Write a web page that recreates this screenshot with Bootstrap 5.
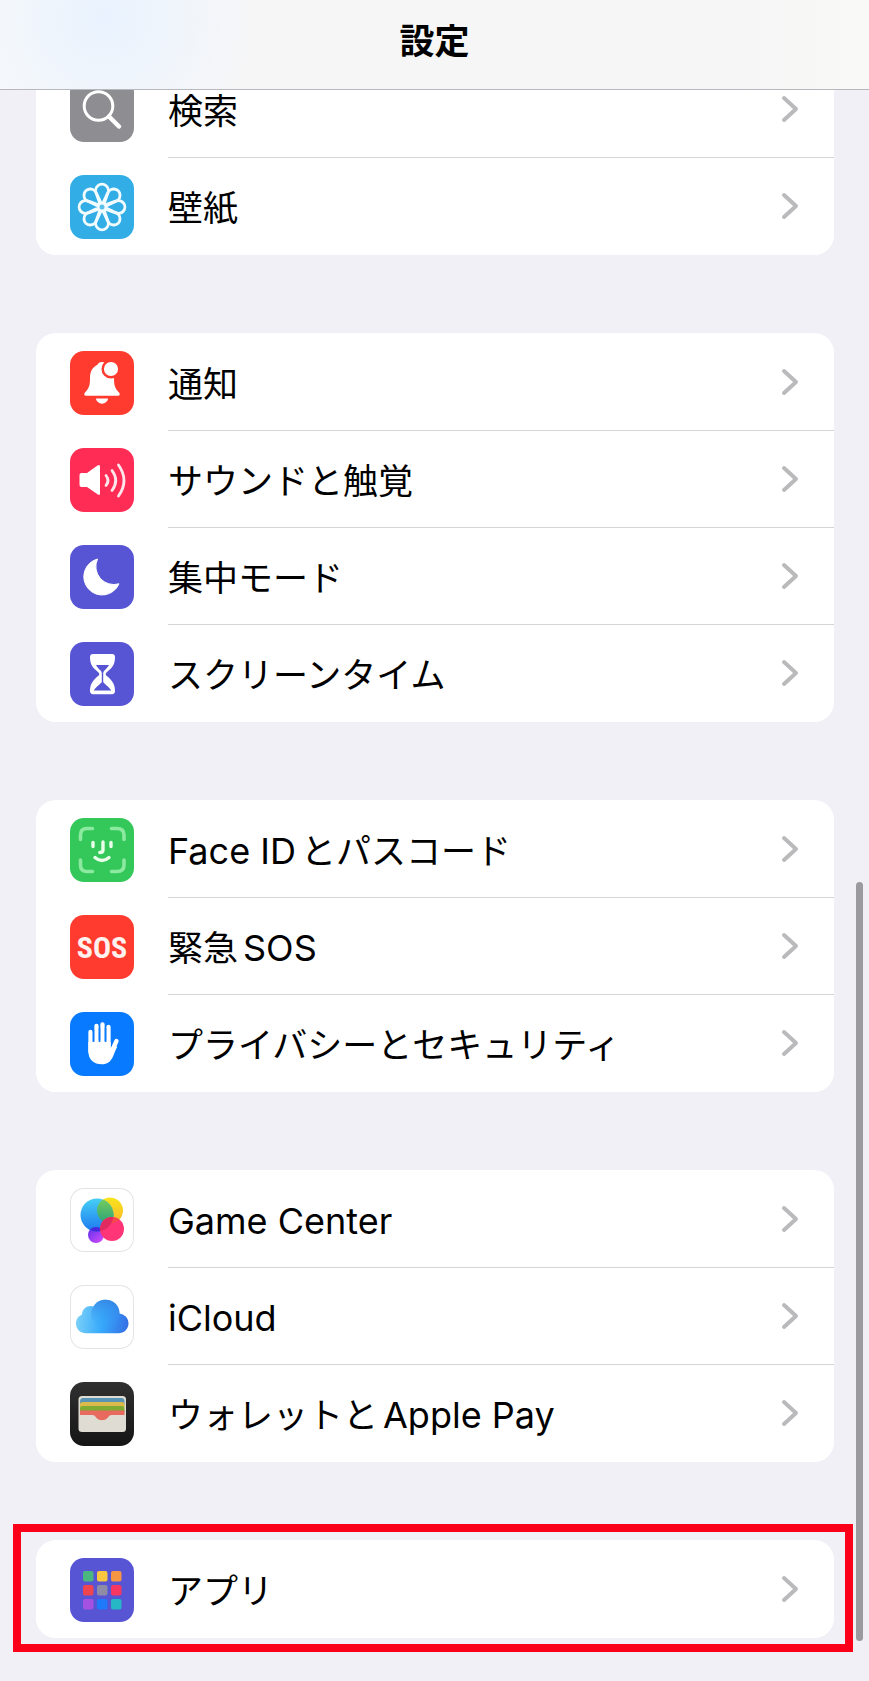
<!DOCTYPE html>
<html lang="ja">
<head>
<meta charset="utf-8">
<meta name="viewport" content="width=device-width, initial-scale=1">
<title>設定</title>
<link href="https://cdn.jsdelivr.net/npm/bootstrap@5.3.0/dist/css/bootstrap.min.css" rel="stylesheet">
<style>
  body {
    background: #f2f0f7;
    color: #000;
    font-family: Inter, "Noto Sans CJK JP", sans-serif;
    font-size: 35px;
    line-height: 48px;
  }
  .title-bar {
    height: 90px;
    border-bottom: 1px solid #b9b7be;
    background:
      radial-gradient(circle at 12% 20%, #e9f2fe 0, #eff5fc 60px, #f6f6f600 150px),
      linear-gradient(90deg, #f8fafc 0, #f6f6f7 25%, #f6f6f6 85%, #f9f9f8 100%);
  }
  .title-bar h1 { font-size: 35px; line-height: 48px; padding-bottom: 8px; }
  .settings { padding: 60px 35px 43px 36px; gap: 78px; }
  .group.list-group {
    background: #fff;
    border-radius: 20px;
    overflow: hidden;
    padding-top: 1px;
  }
  .setting { --bs-list-group-color: #000; padding-left: 34px; gap: 34px; }
  .tile { width: 64px; height: 64px; border-radius: 14px; flex: none; }
  .tile-light { box-shadow: inset 0 0 0 1px #e4e4e6; }
  .label-cell { height: 97px; padding-right: 35px; border-bottom: 1px solid #d5d5d8; }
  .label-text { padding-top: 3px; }
  .setting:last-child .label-cell { border-bottom-color: transparent; }
  .latin { font-size: 36px; }
  .latin-before { margin-right: 5px; }
  .latin-after { margin-left: 5px; }
  .chevron { width: 18px; height: 28px; flex: none; fill: none; stroke: #bababc; stroke-width: 4; stroke-linecap: round; stroke-linejoin: round; }
  .highlight::after {
    content: "";
    position: absolute;
    inset: -16px -19px -14px -23px;
    border: 8px solid #fb0019;
    pointer-events: none;
  }
  .scroll-thumb { top: 882px; right: 6px; width: 7px; bottom: 40px; background: #9b9a9f; z-index: 5; }
</style>
</head>
<body>
<svg class="d-none" aria-hidden="true">
  <symbol id="chevron" viewBox="0 0 18 28"><path d="M3 3l12 11L3 25"/></symbol>
</svg>

<header class="title-bar fixed-top d-flex align-items-center justify-content-center">
  <h1 class="fw-bold m-0">設定</h1>
</header>

<main class="settings position-relative d-flex flex-column">
  <nav class="group list-group list-group-flush" aria-label="検索と壁紙">
    <a href="#" class="setting list-group-item list-group-item-action border-0 py-0 pe-0 d-flex align-items-center">
      <svg class="tile" viewBox="0 0 64 64" style="background:#8e8d92" aria-hidden="true"><g fill="none" stroke="#fff" stroke-linecap="round"><circle cx="28.500" cy="28" r="14.300" stroke-width="3"/><path d="M39 38.500l10 10" stroke-width="4.500"/></g></svg>
      <span class="label-cell flex-grow-1 d-flex align-items-center justify-content-between"><span class="label-text">検索</span><svg class="chevron"><use href="#chevron"/></svg></span>
    </a>
    <a href="#" class="setting list-group-item list-group-item-action border-0 py-0 pe-0 d-flex align-items-center">
      <svg class="tile" viewBox="0 0 64 64" style="background:#32ade6" aria-hidden="true">
        <defs><path id="petal" d="M32 30L26.800 19A6.300 6.300 0 1 1 37.200 19Z"/></defs>
        <g fill="none" stroke="#f2fcff" stroke-width="2.900" stroke-linejoin="round"><use href="#petal"/><use href="#petal" transform="rotate(45 32 32)"/><use href="#petal" transform="rotate(90 32 32)"/><use href="#petal" transform="rotate(135 32 32)"/><use href="#petal" transform="rotate(180 32 32)"/><use href="#petal" transform="rotate(225 32 32)"/><use href="#petal" transform="rotate(270 32 32)"/><use href="#petal" transform="rotate(315 32 32)"/></g>
        <circle cx="32" cy="32" r="2.500" fill="#5bbfe9"/>
      </svg>
      <span class="label-cell flex-grow-1 d-flex align-items-center justify-content-between"><span class="label-text">壁紙</span><svg class="chevron"><use href="#chevron"/></svg></span>
    </a>
  </nav>

  <nav class="group list-group list-group-flush" aria-label="通知と集中">
    <a href="#" class="setting list-group-item list-group-item-action border-0 py-0 pe-0 d-flex align-items-center">
      <svg class="tile" viewBox="0 0 64 64" style="background:#ff3b2f" aria-hidden="true"><path fill="#fff" d="M32 11c-2.500 0-4 1.200-4.500 2.700C22.500 16 20 20.500 20 27c0 8-1 10-5 14.500-1.500 2-.7 3.300 1.200 3.300h31.600c1.900 0 2.700-1.300 1.200-3.300C45 37 44 35 44 27c0-7-3-11-7.500-13.300C36 12.200 34.500 11 32 11ZM25.800 47.500h12.400c-.8 3.300-3.200 5.200-6.200 5.200s-5.400-1.900-6.200-5.200Z"/><circle cx="41" cy="18" r="8.300" fill="#fff" stroke="#ff3b2f" stroke-width="2.500"/></svg>
      <span class="label-cell flex-grow-1 d-flex align-items-center justify-content-between"><span class="label-text">通知</span><svg class="chevron"><use href="#chevron"/></svg></span>
    </a>
    <a href="#" class="setting list-group-item list-group-item-action border-0 py-0 pe-0 d-flex align-items-center">
      <svg class="tile" viewBox="0 0 64 64" style="background:#ff2d55" aria-hidden="true"><path fill="#fff" d="M11.500 25H17L27.500 17.400Q30 16 30 18.500v27Q30 48 27.500 46.300L17 39h-5.500Q9.500 39 9.500 37V27Q9.500 25 11.500 25Z"/><g fill="none" stroke="#ffe6ec" stroke-width="2.800" stroke-linecap="round"><path d="M36 27.500q4 5 0 10M42 22.500q7.500 10 0 20M48.500 17q11 15.500 0 31"/></g></svg>
      <span class="label-cell flex-grow-1 d-flex align-items-center justify-content-between"><span class="label-text">サウンドと触覚</span><svg class="chevron"><use href="#chevron"/></svg></span>
    </a>
    <a href="#" class="setting list-group-item list-group-item-action border-0 py-0 pe-0 d-flex align-items-center">
      <svg class="tile" viewBox="0 0 64 64" style="background:#5755d3" aria-hidden="true"><path fill="#fff" stroke="#fff" stroke-linejoin="round" d="M27.500 14A18.300 18.300 0 1 0 49 38.800A18 18 0 0 1 27.500 14Z"/></svg>
      <span class="label-cell flex-grow-1 d-flex align-items-center justify-content-between"><span class="label-text">集中モード</span><svg class="chevron"><use href="#chevron"/></svg></span>
    </a>
    <a href="#" class="setting list-group-item list-group-item-action border-0 py-0 pe-0 d-flex align-items-center">
      <svg class="tile" viewBox="0 0 64 64" style="background:#5755d3" aria-hidden="true"><path fill="#fff" d="M23 12h19c2 0 3 1.300 3 3 0 8-3 11-8.500 15.500-1 1-1 2.300 0 3.200C42 38 45 42 45 49c0 2-1 3.200-3 3.200H23c-2 0-3-1.200-3-3.200 0-7 3-11 8.500-15.300 1-.9 1-2.200 0-3.200C23 26 20 23 20 15c0-1.700 1-3 3-3Z"/><path fill="#5755d3" d="M26 23h13c-1 2-3 4-4.800 5.800-.8.900-1 1.700-1 3.200v8c1 1.800 5.600 4.400 8 8.600H23.800c2.400-4.200 7-6.800 8-8.600v-8c0-1.500-.2-2.300-1-3.200C29 27 27 25 26 23Z"/></svg>
      <span class="label-cell flex-grow-1 d-flex align-items-center justify-content-between"><span class="label-text">スクリーンタイム</span><svg class="chevron"><use href="#chevron"/></svg></span>
    </a>
  </nav>

  <nav class="group list-group list-group-flush" aria-label="セキュリティ">
    <a href="#" class="setting list-group-item list-group-item-action border-0 py-0 pe-0 d-flex align-items-center">
      <svg class="tile" viewBox="0 0 64 64" style="background:#34c759" aria-hidden="true"><g fill="none" stroke-linecap="round"><path stroke="#8ce9a0" stroke-width="3.600" d="M10.500 21.500V17q0-6.500 6.500-6.500h5.500M41.500 10.500H47q7 0 7 6.500v4.500M10.500 42v5q0 6.500 6.500 6.500h5.500M41.500 53.500H47q7 0 7-6.500v-5"/><path stroke="#e9ffea" stroke-width="3.400" d="M23 24.500v4M41 24.500v4M33 24v8q0 2.500-3.200 2.500M25 39.500q7 6 14 0"/></g></svg>
      <span class="label-cell flex-grow-1 d-flex align-items-center justify-content-between"><span class="label-text"><span class="latin latin-before">Face ID</span>とパスコード</span><svg class="chevron"><use href="#chevron"/></svg></span>
    </a>
    <a href="#" class="setting list-group-item list-group-item-action border-0 py-0 pe-0 d-flex align-items-center">
      <svg class="tile" viewBox="0 0 64 64" style="background:#ff3b2f" aria-hidden="true"><text x="32" y="43" text-anchor="middle" fill="#fff1ee" font-family="'Roboto Condensed','Liberation Sans Narrow',sans-serif" font-weight="700" font-size="30">SOS</text></svg>
      <span class="label-cell flex-grow-1 d-flex align-items-center justify-content-between"><span class="label-text">緊急<span class="latin latin-after">SOS</span></span><svg class="chevron"><use href="#chevron"/></svg></span>
    </a>
    <a href="#" class="setting list-group-item list-group-item-action border-0 py-0 pe-0 d-flex align-items-center">
      <svg class="tile" viewBox="0 0 64 64" style="background:#087aff" aria-hidden="true"><g fill="none" stroke="#fff" stroke-width="4.300" stroke-linecap="round"><path d="M20.500 20v20M26.500 14v22M32.500 12.300V36M38.500 15v21M46.500 29L41 41"/></g><path fill="#fff" d="M18.350 30h22.300v7l3.500-5 3 3C45.500 38 44.500 41 43 44.500 40.500 50 37 52.300 32 52.300c-8.500 0-13.650-4.800-13.650-13.300Z"/><path stroke="#087aff" stroke-width="1.500" d="M23.500 18v11M29.500 16v12M35.500 16v13"/></svg>
      <span class="label-cell flex-grow-1 d-flex align-items-center justify-content-between"><span class="label-text">プライバシーとセキュリティ</span><svg class="chevron"><use href="#chevron"/></svg></span>
    </a>
  </nav>

  <nav class="group list-group list-group-flush" aria-label="サービス">
    <a href="#" class="setting list-group-item list-group-item-action border-0 py-0 pe-0 d-flex align-items-center">
      <svg class="tile tile-light" viewBox="0 0 64 64" aria-hidden="true">
        <defs>
          <linearGradient id="gcBlue" x1="0" y1="0" x2="0" y2="1"><stop stop-color="#47cff5"/><stop offset="1" stop-color="#1c79ef"/></linearGradient>
          <linearGradient id="gcYellow" x1="0" y1="0" x2="0" y2="1"><stop stop-color="#f8e51d"/><stop offset="1" stop-color="#fbb52b"/></linearGradient>
          <linearGradient id="gcGreen" x1="0" y1="0" x2="0" y2="1"><stop stop-color="#79cf59"/><stop offset="1" stop-color="#2ba27c"/></linearGradient>
          <linearGradient id="gcPurple" x1="0" y1="0" x2="1" y2="1"><stop stop-color="#5a30e8"/><stop offset="1" stop-color="#d94cff"/></linearGradient>
          <clipPath id="gcClip"><circle cx="27" cy="27" r="16.500"/></clipPath>
          <clipPath id="gcRedClip"><circle cx="42" cy="41" r="12"/></clipPath>
        </defs>
        <circle cx="26" cy="47" r="8" fill="url(#gcPurple)"/><circle cx="40" cy="22.500" r="13" fill="url(#gcYellow)"/><circle cx="27" cy="27" r="16.500" fill="url(#gcBlue)"/><circle cx="40" cy="22.500" r="13" fill="url(#gcGreen)" clip-path="url(#gcClip)"/><circle cx="26" cy="47" r="8" fill="#4827dc" clip-path="url(#gcClip)"/><circle cx="42" cy="41" r="12" fill="#ff3578"/><g clip-path="url(#gcRedClip)"><circle cx="40" cy="22.500" r="13" fill="#f8484e"/><circle cx="27" cy="27" r="16.500" fill="#e02b60"/></g>
      </svg>
      <span class="label-cell flex-grow-1 d-flex align-items-center justify-content-between"><span class="label-text latin">Game Center</span><svg class="chevron"><use href="#chevron"/></svg></span>
    </a>
    <a href="#" class="setting list-group-item list-group-item-action border-0 py-0 pe-0 d-flex align-items-center">
      <svg class="tile tile-light" viewBox="0 0 64 64" aria-hidden="true">
        <defs><linearGradient id="cloudFill" gradientUnits="userSpaceOnUse" x1="6" y1="36" x2="58" y2="42"><stop stop-color="#7ad0f8"/><stop offset=".5" stop-color="#36a9fb"/><stop offset="1" stop-color="#356fe5"/></linearGradient>
        <linearGradient id="cloudTop" x1="0" y1="0" x2="0" y2="1"><stop stop-color="#357fe0" stop-opacity=".75"/><stop offset="1" stop-color="#36a9fb" stop-opacity="0"/></linearGradient></defs>
        <path fill="url(#cloudFill)" d="M16.500 48.300C10 48.300 6 44 6 38.500c0-4.500 2.500-7.500 6-9 .3-5.500 4-8.500 9-8.500 1 0 1.700.2 2.500.5 2-4 6.500-6.700 12-6.700 8 0 14 5.500 14 13.700 5.500.8 9 4.800 9 9.800 0 6-4.500 10-10 10Z"/><circle cx="35.500" cy="29" r="14.200" fill="url(#cloudTop)"/>
      </svg>
      <span class="label-cell flex-grow-1 d-flex align-items-center justify-content-between"><span class="label-text latin">iCloud</span><svg class="chevron"><use href="#chevron"/></svg></span>
    </a>
    <a href="#" class="setting list-group-item list-group-item-action border-0 py-0 pe-0 d-flex align-items-center">
      <svg class="tile" viewBox="0 0 64 64" style="background:linear-gradient(#303030,#151515)" aria-hidden="true"><rect x="8.500" y="14" width="47.500" height="36" rx="3.500" fill="#dfddd3"/><path fill="#5794b5" d="M10 19.500q0-3.500 3-3.500h38.500q3 0 3 3.500v4H10Z"/><path fill="#dbb94a" d="M10 22q0-2 3-2h38.500q3 0 3 2v3H10Z"/><path fill="#80ab32" d="M10 26q0-2 3-2h38.500q3 0 3 2v4H10Z"/><path fill="#e8695d" d="M10 28.500h44.500V33H42c-2.500 0-3 1-4.500 3-3 3-8 3-11 0-1.500-2-2-3-4.500-3H10Z"/></svg>
      <span class="label-cell flex-grow-1 d-flex align-items-center justify-content-between"><span class="label-text">ウォレットと<span class="latin latin-after">Apple Pay</span></span><svg class="chevron"><use href="#chevron"/></svg></span>
    </a>
  </nav>

  <div class="highlight position-relative">
    <nav class="group list-group list-group-flush" aria-label="アプリ">
      <a href="#" class="setting list-group-item list-group-item-action border-0 py-0 pe-0 d-flex align-items-center">
        <svg class="tile" viewBox="0 0 64 64" style="background:#5755d3" aria-hidden="true"><g stroke-width="0"><rect x="13" y="13" width="10.500" height="10.500" rx="2" fill="#4bb780"/><rect x="27" y="13" width="10.500" height="10.500" rx="2" fill="#fac53f"/><rect x="41" y="13" width="10.500" height="10.500" rx="2" fill="#f69645"/><rect x="13" y="27" width="10.500" height="10.500" rx="2" fill="#f0454f"/><rect x="27" y="27" width="10.500" height="10.500" rx="2" fill="#8e8ba6"/><rect x="41" y="27" width="10.500" height="10.500" rx="2" fill="#f73762"/><rect x="13" y="41" width="10.500" height="10.500" rx="2" fill="#a552e3"/><rect x="27" y="41" width="10.500" height="10.500" rx="2" fill="#1f79f8"/><rect x="41" y="41" width="10.500" height="10.500" rx="2" fill="#26b8c4"/></g></svg>
        <span class="label-cell flex-grow-1 d-flex align-items-center justify-content-between"><span class="label-text">アプリ</span><svg class="chevron"><use href="#chevron"/></svg></span>
      </a>
    </nav>
  </div>

  <div class="scroll-thumb position-absolute rounded-pill" aria-hidden="true"></div>
</main>
<script src="https://cdn.jsdelivr.net/npm/bootstrap@5.3.0/dist/js/bootstrap.bundle.min.js"></script>
</body>
</html>
